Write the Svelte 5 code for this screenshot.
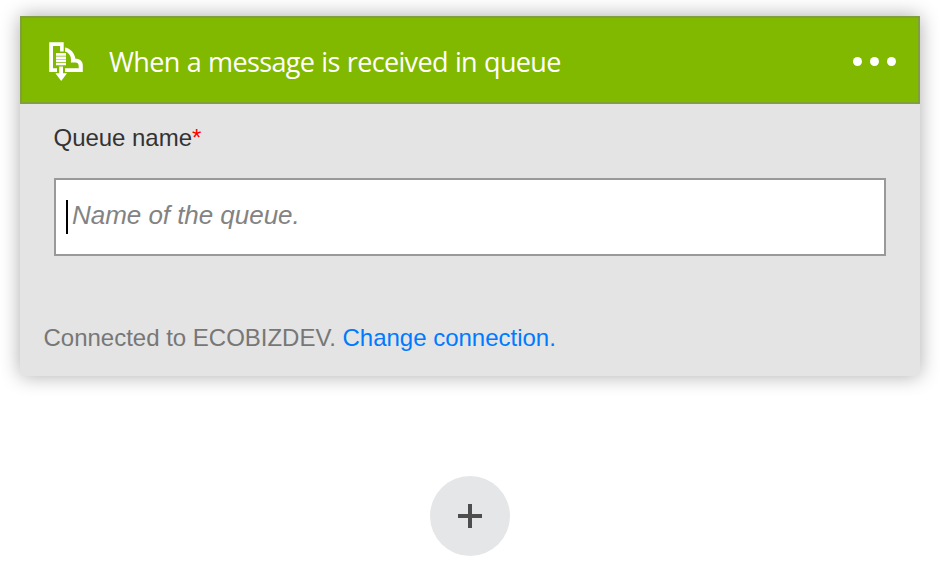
<script>
  let title = "When a message is received in queue";
  let connection = "ECOBIZDEV";
  let queue = "";
</script>

<style>
  :global(body) {
    background: #fff;
    font-family: "Liberation Sans", Arial, sans-serif;
  }

  .designer {
    display: flex;
    flex-direction: column;
    align-items: center;
    padding-top: 16px;
  }

  .card {
    box-sizing: border-box;
    width: 900px;
    height: 360px;
    background: #e4e4e4;
    border-radius: 0 0 4px 4px;
    box-shadow: 0 0 20px rgba(0, 0, 0, 0.33);
  }

  .card--header {
    box-sizing: border-box;
    display: flex;
    align-items: center;
    height: 88px;
    padding: 0 22px 0 26px;
    background: #80b900;
    border: 2px solid #829f3d;
  }

  .card--icon {
    width: 36px;
    height: 44px;
    margin-right: 25px;
  }

  .card--title {
    flex: 1;
    margin: 0;
    padding-top: 4px;
    color: #fff;
    font-family: "Segoe UI", "Open Sans", sans-serif;
    font-size: 27px;
    font-weight: 400;
    letter-spacing: -0.65px;
    word-spacing: 0.7px;
    line-height: 38px;
    white-space: nowrap;
  }

  .card--menu {
    display: flex;
    gap: 8px;
    padding: 2px 0 0;
    border: 0;
    background: none;
  }

  .dot {
    width: 9px;
    height: 9px;
    border-radius: 50%;
    background: #fff;
  }

  .card--body {
    padding: 20px 34px 0;
  }

  .label {
    display: block;
    margin-left: -0.5px;
    color: #333;
    font-size: 24px;
    letter-spacing: -0.03px;
    line-height: 28px;
  }

  .required {
    color: #f00;
  }

  .field {
    box-sizing: border-box;
    display: flex;
    align-items: center;
    height: 78px;
    margin-top: 26px;
    padding: 0 10px;
    background: #fff;
    border: 2px solid #999;
  }

  .caret {
    width: 2px;
    height: 34px;
    background: #000;
  }

  .placeholder {
    margin-left: 4px;
    padding-bottom: 4px;
    color: #838383;
    font-size: 26px;
    font-style: italic;
    letter-spacing: -0.04px;
    line-height: 30px;
  }

  .card--footer {
    margin: 68px 0 0 23.5px;
    color: #777;
    font-size: 24px;
    letter-spacing: -0.01px;
    line-height: 28px;
  }

  .link {
    color: #007aff;
    text-decoration: none;
  }

  .add {
    display: flex;
    align-items: center;
    justify-content: center;
    width: 80px;
    height: 80px;
    margin-top: 100px;
    padding: 0;
    border: 0;
    border-radius: 50%;
    background: #e5e6e8;
  }
</style>

<div class="designer">
  <section class="card">
    <header class="card--header">
      <svg class="card--icon" viewBox="0 0 36 44" fill="#fff">
        <path d="M1.2 4.2h14.5v9.2h-3.6V8H5v22.3h4V34H1.2z" />
        <path d="M8 15h10v2.7H8zM8 18.4h10v2.5H8zM8 21.6h10v2.5H8zM8 24.8h10v2.5H8z" />
        <path d="M11.2 28.5h3.8v6.7h4L13.2 43 7.4 35.2h3.8z" />
        <path
          d="M17 9.4C23 10.6 26.7 15.3 27.4 20.7C31.7 20.6 34.8 22.8 34.8 27.5V34H17v-3.7h13.7V28c0-2.8-1.6-3.8-4-3.6H22.8C24 19 21 14.6 17 13.6z"
        />
      </svg>
      <h1 class="card--title">{title}</h1>
      <button class="card--menu" type="button" aria-label="Menu">
        {#each [0, 1, 2] as dot (dot)}
          <span class="dot"></span>
        {/each}
      </button>
    </header>
    <div class="card--body">
      <span class="label">Queue name<span class="required">*</span></span>
      <div class="field">
        <span class="caret"></span>
        <span class="placeholder">{queue || "Name of the queue."}</span>
      </div>
    </div>
    <div class="card--footer">
      Connected to {connection}. <a class="link" href="#change">Change connection.</a>
    </div>
  </section>
  <button class="add" type="button" aria-label="New step">
    <svg width="24" height="24" viewBox="0 0 24 24" fill="#4d4d4d">
      <path d="M10 0h4v10h10v4H14v10h-4V14H0v-4h10z" />
    </svg>
  </button>
</div>
